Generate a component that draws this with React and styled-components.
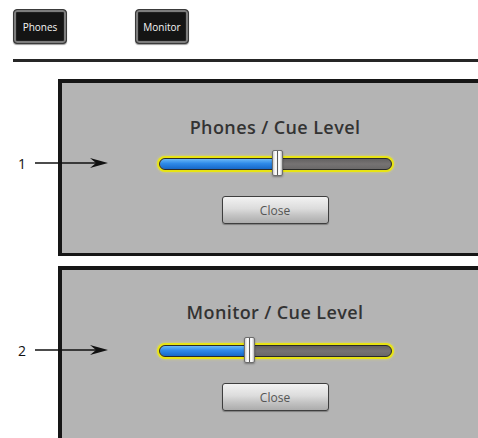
import React from "react";
import styled, { createGlobalStyle } from "styled-components";

const Global = createGlobalStyle`
  html, body { margin: 0; padding: 0; background: #ffffff; overflow: hidden; }
  body { font-family: "Open Sans", "Liberation Sans", sans-serif; width: 478px; height: 438px; }
`;

const Page = styled.div`
  width: 478px;
  height: 438px;
  overflow: hidden;
  display: flex;
  flex-direction: column;
  & > * { flex-shrink: 0; }
`;

const Toolbar = styled.div`
  display: flex;
  gap: 68px;
  padding: 9px 0 0 13px;
  height: 35px;
`;

const HwButton = styled.div`
  box-sizing: border-box;
  height: 35px;
  padding: 0 4px;
  min-width: 54px;
  display: flex;
  align-items: center;
  justify-content: center;
  background: #141414;
  border: 1px solid #3a3a3a;
  border-radius: 4px;
  box-shadow: inset 0 0 0 2px #7d7d7d, inset 0 0 0 3px #202020, 0 1px 1px rgba(0,0,0,0.4);
  color: #f4f4f4;
  font-family: "Open Sans", sans-serif;
  font-size: 10px;
  font-weight: 400;
`;

const Rule = styled.div`
  margin: 15px 0 0 13px;
  height: 3px;
  background: #262626;
`;

const Stack = styled.div`
  display: flex;
  flex-direction: column;
  gap: 10px;
  margin-top: 17px;
  & > * { flex-shrink: 0; }
`;

const Row = styled.div`
  position: relative;
  padding-left: 58px;
`;

const Panel = styled.div`
  box-sizing: border-box;
  height: ${p => p.$h}px;
  margin-right: -24px;
  background: #b4b4b4;
  border-top: 4px solid #161616;
  border-left: 4px solid #161616;
  border-bottom: 3px solid #161616;
  display: flex;
  flex-direction: column;
  align-items: center;
  padding: ${p => p.$pt}px 24px 0 10px;
  & > * { flex-shrink: 0; }
`;

const Title = styled.div`
  font-family: "Open Sans", sans-serif;
  font-weight: 600;
  font-size: 18px;
  line-height: 24px;
  letter-spacing: 0.4px;
  color: #333333;
  margin-bottom: ${p => p.$mb}px;
`;

const Track = styled.div`
  position: relative;
  box-sizing: border-box;
  width: 237px;
  height: 16px;
  border-radius: 8px;
  background: #e8e414;
  padding: 2px;
  box-shadow: 0 0 3px rgba(235, 230, 80, 0.8);
`;

const Groove = styled.div`
  box-sizing: border-box;
  height: 12px;
  border-radius: 6px;
  border: 1px solid #2a2a2a;
  background: linear-gradient(#636161, #767373 50%, #6a6868);
  overflow: hidden;
  display: flex;
`;

const Fill = styled.div`
  height: 100%;
  background: linear-gradient(#6ab8f6, #2f8ae8 45%, #1668c8);
  border-radius: 6px 0 0 6px;
`;

const Thumb = styled.div`
  position: absolute;
  top: -6px;
  width: 11px;
  height: 26px;
  box-sizing: border-box;
  border: 1px solid #6e6e6e;
  border-radius: 2px;
  background: linear-gradient(90deg, #cfcfcf, #ffffff 30%, #f0f0f0 45%, #5a5a5a 48%, #5a5a5a 55%, #f4f4f4 58%, #ffffff 75%, #bdbdbd);
  box-shadow: 0 1px 2px rgba(0,0,0,0.35);
`;

const CloseButton = styled.div`
  box-sizing: border-box;
  margin-top: 24px;
  width: 107px;
  height: 28px;
  border: 1px solid #3e3e3e;
  border-radius: 3px;
  background: linear-gradient(#f2f2f2, #dcdcdc 45%, #c4c4c4 70%, #acacac);
  box-shadow: 0 1px 1px rgba(0,0,0,0.3);
  display: flex;
  align-items: center;
  justify-content: center;
  font-family: "Open Sans", sans-serif;
  font-size: 12px;
  color: #555555;
`;

const Callout = styled.div`
  position: absolute;
  left: 0;
  top: ${p => p.$top}px;
  display: flex;
  align-items: center;
  height: 20px;
`;

const CalloutNum = styled.span`
  width: 35px;
  padding-left: 18px;
  box-sizing: border-box;
  font-family: "Open Sans", sans-serif;
  font-weight: 400;
  font-size: 14px;
  color: #111111;
`;

const Arrow = () => (
  <svg width="74" height="12" viewBox="0 0 74 12">
    <line x1="0" y1="6" x2="62" y2="6" stroke="#111" strokeWidth="1.3" />
    <path d="M 73 6 L 55 1 L 61 6 L 55 11 Z" fill="#111" />
  </svg>
);

function Slider({ value }) {
  return (
    <Track>
      <Groove>
        <Fill style={{ width: `${value}%` }} />
      </Groove>
      <Thumb style={{ left: `calc(${value}% - 4px)` }} />
    </Track>
  );
}

function LevelPanel({ num, title, value, height, pt, gap }) {
  return (
    <Row>
      <Callout $top={74}>
        <CalloutNum>{num}</CalloutNum>
        <Arrow />
      </Callout>
      <Panel $h={height} $pt={pt}>
        <Title $mb={gap}>{title}</Title>
        <Slider value={value} />
        <CloseButton>Close</CloseButton>
      </Panel>
    </Row>
  );
}

export default function App() {
  return (
    <Page>
      <Global />
      <Toolbar>
        <HwButton>Phones</HwButton>
        <HwButton>Monitor</HwButton>
      </Toolbar>
      <Rule />
      <Stack>
        <LevelPanel num="1" title="Phones / Cue Level" value={50.5} height={177} pt={32} gap={17} />
        <LevelPanel num="2" title="Monitor / Cue Level" value={38.5} height={200} pt={30} gap={19} />
      </Stack>
    </Page>
  );
}
